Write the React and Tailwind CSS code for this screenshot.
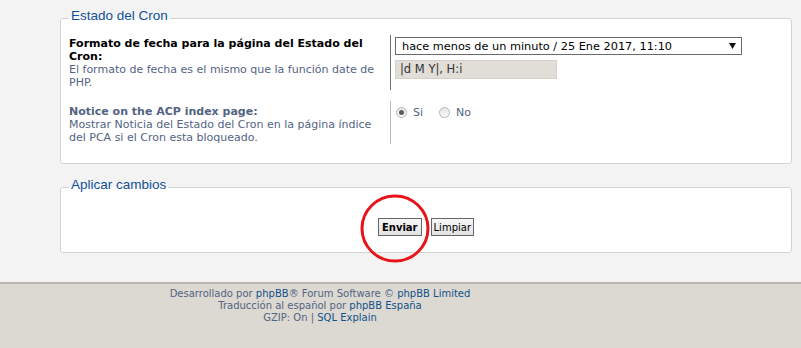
const Radio = ({ checked, label }) => (
  <label className="flex items-center gap-[6px] text-[#536482]">
    <span className="flex h-[11px] w-[11px] items-center justify-center rounded-full border border-[#b4b4b4] bg-gradient-to-b from-[#e6e6e6] to-[#fafafa]">
      {checked && <span className="h-[5px] w-[5px] rounded-full bg-[#5a5a5a]" />}
    </span>
    <span>{label}</span>
  </label>
);

const Legend = ({ children }) => (
  <legend className="ml-0 px-[2px] pb-[4px] font-['Liberation_Sans',Arial,sans-serif] text-[13.5px] leading-[14px] text-[#115098]">
    {children}
  </legend>
);

export default function App() {
  return (
    <div className="flex min-h-[348px] flex-col bg-[#f3f3f3] font-['DejaVu_Sans',Verdana,sans-serif] text-[11px] leading-[13px]">
      <div className="pl-[60px] pr-[9px] pt-[9px] pb-[29px]">
        <fieldset className="rounded-[3px] border border-[#d3d3d3] bg-white px-[8px] pb-[19px]">
          <Legend>Estado del Cron</Legend>

          <div className="mt-[8px] flex">
            <div className="w-[321px] shrink-0 pt-[2px] pr-[4px]">
              <div className="font-bold text-black">Formato de fecha para la página del Estado del Cron:</div>
              <div className="text-[#536482]">El formato de fecha es el mismo que la función date de PHP.</div>
            </div>
            <div className="flex flex-col gap-[5px] border-l border-[#6f6f6f] pl-[4px] pt-[2px] pb-[11px]">
              <div className="flex h-[18px] w-[347px] items-center justify-between border border-[#6a6a6a] bg-white pl-[6px] pr-[5px] text-[11.3px] text-black">
                <span>hace menos de un minuto / 25 Ene 2017, 11:10</span>
                <svg width="7" height="6" viewBox="0 0 7 6">
                  <path d="M0 0 H7 L3.5 6 Z" fill="#111" />
                </svg>
              </div>
              <div className="flex h-[19px] w-[162px] items-center border border-[#d5d1cb] bg-[#e1ddd7] pl-[4px] text-[11.5px] text-[#333]">
                |d M Y|, H:i
              </div>
            </div>
          </div>

          <div className="mt-[11px] flex">
            <div className="w-[321px] shrink-0 pt-[4px] pr-[4px]">
              <div className="font-bold text-[#536482]">Notice on the ACP index page:</div>
              <div className="text-[#536482]">Mostrar Noticia del Estado del Cron en la página índice del PCA si el Cron esta bloqueado.</div>
            </div>
            <div className="flex items-start gap-[16px] border-l border-[#b9b9b9] pl-[5px] pt-[5px]">
              <Radio checked label="Si" />
              <Radio label="No" />
            </div>
          </div>
        </fieldset>

        <fieldset className="mt-[14px] rounded-[3px] border border-[#d3d3d3] bg-white px-[8px] pb-[16px]">
          <Legend>Aplicar cambios</Legend>
          <div className="mt-[22px] flex justify-center gap-[9px]">
            <span className="relative">
              <button className="h-[18px] border border-[#666] bg-gradient-to-b from-[#f6f6f6] to-[#e2e2e2] px-[3px] text-[10px] font-bold text-black">
                Enviar
              </button>
              <svg className="pointer-events-none absolute left-[-18px] top-[-24px]" width="70" height="69" viewBox="0 0 70 69">
                <ellipse cx="35" cy="34.5" rx="33" ry="32.5" fill="none" stroke="#e8141b" strokeWidth="3" />
              </svg>
            </span>
            <button className="h-[18px] border border-[#666] bg-gradient-to-b from-[#f6f6f6] to-[#e2e2e2] px-[2px] text-[10px] text-black">
              Limpiar
            </button>
          </div>
        </fieldset>
      </div>

      <footer className="flex-1 border-t-2 border-[#b8b5b0] bg-[#dcd8d2] pt-[4px] text-[10px] leading-[12px] text-[#536482]">
        <div className="w-[640px] text-center">
          <div>
            Desarrollado por <span className="text-[#105289]">phpBB</span>® Forum Software © <span className="text-[#105289]">phpBB Limited</span>
          </div>
          <div>
            Traducción al español por <span className="text-[#105289]">phpBB España</span>
          </div>
          <div>
            GZIP: On | <span className="text-[#105289]">SQL Explain</span>
          </div>
        </div>
      </footer>
    </div>
  );
}
